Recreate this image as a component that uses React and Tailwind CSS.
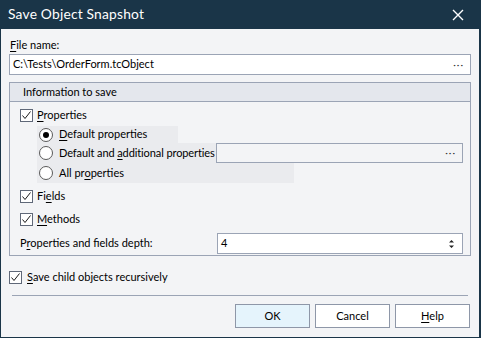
import { Fragment } from 'react'

function Mn({ text, at }) {
  // underline the access-key letter
  return (
    <span>
      {text.slice(0, at)}
      <span className="underline underline-offset-2">{text[at]}</span>
      {text.slice(at + 1)}
    </span>
  )
}

function Check() {
  return (
    <span className="w-[13px] h-[13px] border border-[#5f6878] bg-white flex items-center justify-center shrink-0">
      <svg width="11" height="11" viewBox="0 0 11 11">
        <path d="M1.5 5.5 L4 8.5 L9.5 1.5" fill="none" stroke="#1a1a1a" strokeWidth="1" />
      </svg>
    </span>
  )
}

function Radio({ on }) {
  return (
    <span className="w-[14px] h-[14px] rounded-full border border-[#5a5a5a] bg-white flex items-center justify-center shrink-0">
      {on && <span className="w-[6px] h-[6px] rounded-full bg-black" />}
    </span>
  )
}

function Dots() {
  return <span className="text-[10px] tracking-[1px] text-[#333] leading-none pb-[2px]">···</span>
}

export default function App() {
  return (
    <div className="w-[481px] h-[338px] bg-[#1a3548] pl-px pr-[2px] pb-px flex flex-col font-['Lato',sans-serif] text-[11px] text-black">
      {/* Title bar */}
      <div className="h-[29px] flex items-center justify-between pl-[7px] pr-[15px] shrink-0">
        <span className="text-white text-[13.8px] tracking-[0.2px]">Save Object Snapshot</span>
        <svg width="12" height="12" viewBox="0 0 12 12">
          <path d="M1 1 L11 11 M11 1 L1 11" stroke="white" strokeWidth="1.4" />
        </svg>
      </div>

      {/* Body */}
      <div className="flex-1 bg-[#f3f4f6] px-[8px] pt-[8px] flex flex-col">
        <div className="h-[16px] leading-[16px] pl-px"><Mn text="File name:" at={0} /></div>
        <div className="mt-px h-[21px] border border-[#9ba4b5] bg-white flex items-center justify-between pl-[3px] pr-[6px]">
          <span>C:\Tests\OrderForm.tcObject</span>
          <Dots />
        </div>

        {/* Group */}
        <div className="mt-[7px] h-[174px] border border-[#9ba4b5] flex flex-col">
          <div className="h-[19px] bg-[#e4e7ed] border-b border-[#9ba4b5] flex items-center pl-[13px]">
            Information to save
          </div>
          <div className="pl-[10px] pr-[7px] flex flex-col">
            <div className="h-[20px] mt-[3px] flex items-center gap-[4px]">
              <Check />
              <Mn text="Properties" at={0} />
            </div>
            <div className="pl-[17px] flex flex-col">
              <div className="h-[17px] mt-px flex items-center">
                <div className="w-[141px] h-full bg-[#eaebee] flex items-center gap-[6px] pl-[2px]">
                  <Radio on />
                  <Mn text="Default properties" at={0} />
                </div>
              </div>
              <div className="h-[20px] flex items-center">
                <div className="h-full bg-[#eaebee] flex items-center gap-[6px] pl-[2px] pr-px whitespace-nowrap shrink-0 tracking-[-0.1px]">
                  <Radio />
                  <span>Default and <Mn text="additional" at={0} /> properties</span>
                </div>
                <div className="flex-1 h-[20px] border border-[#9ba4b5] bg-[#f3f4f6] flex items-center justify-end pr-[6px]">
                  <Dots />
                </div>
              </div>
              <div className="h-[20px] flex items-center">
                <div className="w-[257px] h-full bg-[#eaebee] flex items-center gap-[6px] pl-[2px]">
                  <Radio />
                  <Mn text="All properties" at={6} />
                </div>
              </div>
            </div>
            <div className="h-[20px] mt-[3px] flex items-center gap-[4px]">
              <Check />
              <Mn text="Fields" at={2} />
            </div>
            <div className="h-[20px] mt-[3px] flex items-center gap-[4px]">
              <Check />
              <Mn text="Methods" at={0} />
            </div>
            <div className="h-[21px] mt-[4px] flex items-center">
              <div className="w-[197px]"><Mn text="Properties and fields depth:" at={1} /></div>
              <div className="flex-1 h-[21px] border border-[#9ba4b5] bg-white flex items-center justify-between pl-[3px] pr-[7px]">
                <span>4</span>
                <svg width="7" height="12" viewBox="0 0 7 12">
                  <path d="M3.5 2 L6 4.5 L1 4.5 Z M1 7.5 L6 7.5 L3.5 10 Z" fill="#222" />
                </svg>
              </div>
            </div>
          </div>
        </div>

        <div className="h-[20px] mt-[11px] flex items-center gap-[5px]">
          <Check />
          <Mn text="Save child objects recursively" at={0} />
        </div>

        <div className="mt-[8px] mx-[3px] h-px bg-[#9ba4b5]" />

        <div className="mt-[8px] flex justify-end gap-[5px] pr-px">
          {[
            { label: 'OK', bg: 'bg-[#e5f4fc]', at: -1 },
            { label: 'Cancel', bg: 'bg-white', at: -1 },
            { label: 'Help', bg: 'bg-white', at: 0 },
          ].map((b) => (
            <Fragment key={b.label}>
              <div className={`w-[75px] h-[24px] border border-[#8e97a8] ${b.bg} flex items-center justify-center`}>
                {b.at >= 0 ? <Mn text={b.label} at={b.at} /> : b.label}
              </div>
            </Fragment>
          ))}
        </div>
      </div>
    </div>
  )
}
